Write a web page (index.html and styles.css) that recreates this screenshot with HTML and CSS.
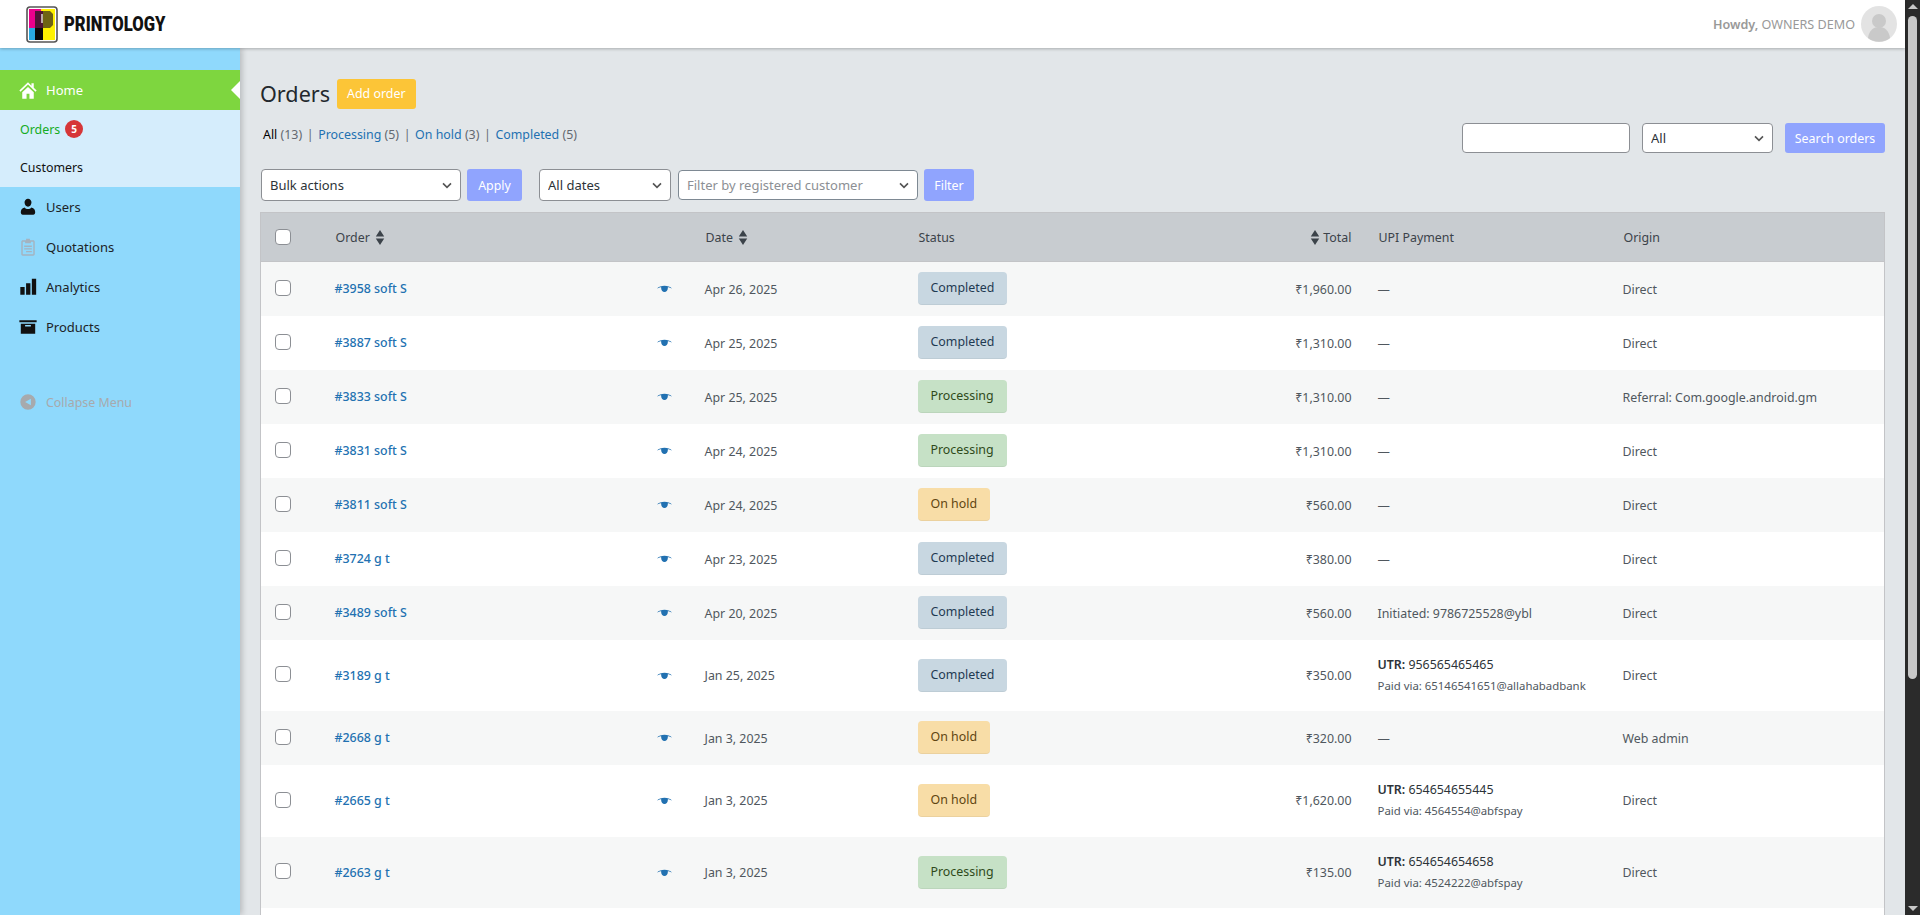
FILE: index.html
```html
<!DOCTYPE html>
<html lang="en">
<head>
    <meta charset="UTF-8">
    <meta name="viewport" content="width=device-width, initial-scale=1.0">
    <title>Orders - Printology</title>
    <link rel="stylesheet" href="styles.css">
</head>
<body>
<svg class="sprites">
    <symbol id="eye" viewBox="0 0 20 12"><path d="M0 6C4 1 16 1 20 6c-3-1.500-4.500-1.800-5.500-1.800.3 3.800-2 6.300-4.500 6.300s-4.800-2.500-4.500-6.300C4.500 4.200 3 4.500 0 6z"/></symbol>
    <symbol id="sort" viewBox="0 0 10 16"><path d="M5 0l4.500 7H.5zM5 16 .5 9h9z"/></symbol>
</svg>
<div class="app">
    <div class="page">
        <header class="topbar">
            <a class="logo" href="#">
                <svg width="32" height="37" viewBox="0 0 32 37">
                    <rect x="3" y="3" width="26" height="31" fill="#fff200"/>
                    <rect x="3" y="3" width="12" height="19" fill="#ec008c"/>
                    <rect x="3" y="22" width="6" height="12" fill="#29abe2"/>
                    <rect x="9" y="22" width="8" height="12" fill="#0a0a0a"/>
                    <rect x="9" y="5" width="8" height="17" fill="#4f1436"/>
                    <path d="M17 5h7l3 3v11l-3 3h-7z" fill="#6e6314"/>
                    <rect x="15" y="8" width="2" height="9" fill="#b9a9a9"/>
                    <rect x="1" y="1" width="30" height="35" rx="3" fill="none" stroke="#555" stroke-width="1.6"/>
                </svg>
                <span class="logo-text">PRINTOLOGY</span>
            </a>
            <div class="account">
                <span class="howdy"><b>Howdy,</b> OWNERS DEMO</span>
                <svg class="avatar" width="36" height="36" viewBox="0 0 36 36">
                    <circle cx="18" cy="18" r="18" fill="#e3e3e3"/>
                    <circle cx="18" cy="15" r="7" fill="#c9c9c9"/>
                    <path d="M7 32c1-8 6-11 11-11s10 3 11 11a18 18 0 0 1-22 0z" fill="#c9c9c9"/>
                </svg>
            </div>
        </header>

        <div class="layout">
            <nav class="sidebar">
                <ul class="menu">
                    <li class="menu-item current">
                        <svg class="menu-icon" viewBox="0 0 20 20"><path fill="#fff" d="M10 2 1 10.5l1.2 1.2L10 4.4l7.8 7.3 1.2-1.2-3-2.8V3h-2.4v2.5zM4 12.4V19h4.5v-5h3v5H16v-6.6L10 6.8z"/></svg>
                        <a href="#">Home</a>
                    </li>
                    <li class="submenu">
                        <a class="sub-link active" href="#">Orders <span class="badge">5</span></a>
                        <a class="sub-link" href="#">Customers</a>
                    </li>
                    <li class="menu-item">
                        <svg class="menu-icon" viewBox="0 0 20 20"><path fill="#111" d="M10 1.5a3.6 3.6 0 0 0-3.6 3.9c0 2.4 1.6 4.3 3.6 4.3s3.6-1.9 3.6-4.3A3.6 3.6 0 0 0 10 1.500zM6.500 10.500C3.500 11.300 2.500 13 2.500 15.500c0 1.800.8 2.500 2 2.500h11c1.200 0 2-.7 2-2.500 0-2.500-1-4.200-4-5-.8 1-2 1.700-3.500 1.700s-2.700-.7-3.500-1.700z"/></svg>
                        <a href="#">Users</a>
                    </li>
                    <li class="menu-item">
                        <svg class="menu-icon" viewBox="0 0 20 20"><path fill="#a5b3bf" fill-rule="evenodd" d="M8 1.500h4V3h3.500c.8 0 1.500.7 1.500 1.500v13c0 .8-.7 1.500-1.500 1.500h-11C3.700 19 3 18.300 3 17.500v-13C3 3.700 3.700 3 4.500 3H8zM4.500 4.500v13h11v-13H13V6H7V4.500zM6 8.500h8V10H6zm0 2.800h8v1.400H6zm2 2.800h6v1.400H8z"/></svg>
                        <a href="#">Quotations</a>
                    </li>
                    <li class="menu-item">
                        <svg class="menu-icon" viewBox="0 0 20 20"><path fill="#111" d="M2 10h4.500v8H2zm6-4h4.500v12H8zm6-4.500h4.500V18H14z"/></svg>
                        <a href="#">Analytics</a>
                    </li>
                    <li class="menu-item">
                        <svg class="menu-icon" viewBox="0 0 20 20"><path fill="#111" fill-rule="evenodd" d="M1 3h18v2H1zm1.500 3.500h15V17h-15zM7 8v1.500h6V8z"/></svg>
                        <a href="#">Products</a>
                    </li>
                </ul>
                <div class="collapse">
                    <svg class="menu-icon" viewBox="0 0 20 20"><path fill="#a7aaad" fill-rule="evenodd" d="M10 2a8 8 0 1 1 0 16 8 8 0 0 1 0-16zm3 4.500L7 10l6 3.500z"/></svg>
                    <span>Collapse Menu</span>
                </div>
            </nav>

            <main class="content">
                <div class="heading">
                    <h1>Orders</h1>
                    <a class="add-order" href="#">Add order</a>
                </div>

                <div class="toolbar-top">
                    <ul class="views">
                        <li><a class="current-view" href="#">All</a> <span class="count">(13)</span></li>
                        <li class="sep">|</li>
                        <li><a href="#">Processing</a> <span class="count">(5)</span></li>
                        <li class="sep">|</li>
                        <li><a href="#">On hold</a> <span class="count">(3)</span></li>
                        <li class="sep">|</li>
                        <li><a href="#">Completed</a> <span class="count">(5)</span></li>
                    </ul>
                    <form class="search">
                        <input class="search-input" type="text">
                        <select class="field search-type"><option>All</option></select>
                        <button class="btn btn-search" type="button">Search orders</button>
                    </form>
                </div>

                <div class="toolbar-bottom">
                    <select class="field bulk"><option>Bulk actions</option></select>
                    <button class="btn btn-apply" type="button">Apply</button>
                    <select class="field dates"><option>All dates</option></select>
                    <select class="field customer"><option>Filter by registered customer</option></select>
                    <button class="btn btn-filter" type="button">Filter</button>
                </div>

                <table class="orders">
                    <thead>
                        <tr>
                            <th class="col-check"><input class="check" type="checkbox"></th>
                            <th class="col-order">Order <svg class="sort"><use href="#sort"/></svg></th>
                            <th class="col-eye"></th>
                            <th class="col-date">Date <svg class="sort"><use href="#sort"/></svg></th>
                            <th class="col-status">Status</th>
                            <th class="col-total"><svg class="sort"><use href="#sort"/></svg> Total</th>
                            <th class="col-upi">UPI Payment</th>
                            <th class="col-origin">Origin</th>
                        </tr>
                    </thead>
                    <tbody>
                        <tr>
                            <td class="col-check"><input class="check" type="checkbox"></td>
                            <td class="col-order"><a href="#">#3958 soft S</a></td>
                            <td class="col-eye"><svg class="eye"><use href="#eye"/></svg></td>
                            <td class="col-date">Apr 26, 2025</td>
                            <td><span class="status completed">Completed</span></td>
                            <td class="col-total">₹1,960.00</td>
                            <td class="col-upi">—</td>
                            <td class="col-origin">Direct</td>
                        </tr>
                        <tr>
                            <td class="col-check"><input class="check" type="checkbox"></td>
                            <td class="col-order"><a href="#">#3887 soft S</a></td>
                            <td class="col-eye"><svg class="eye"><use href="#eye"/></svg></td>
                            <td class="col-date">Apr 25, 2025</td>
                            <td><span class="status completed">Completed</span></td>
                            <td class="col-total">₹1,310.00</td>
                            <td class="col-upi">—</td>
                            <td class="col-origin">Direct</td>
                        </tr>
                        <tr>
                            <td class="col-check"><input class="check" type="checkbox"></td>
                            <td class="col-order"><a href="#">#3833 soft S</a></td>
                            <td class="col-eye"><svg class="eye"><use href="#eye"/></svg></td>
                            <td class="col-date">Apr 25, 2025</td>
                            <td><span class="status processing">Processing</span></td>
                            <td class="col-total">₹1,310.00</td>
                            <td class="col-upi">—</td>
                            <td class="col-origin">Referral: Com.google.android.gm</td>
                        </tr>
                        <tr>
                            <td class="col-check"><input class="check" type="checkbox"></td>
                            <td class="col-order"><a href="#">#3831 soft S</a></td>
                            <td class="col-eye"><svg class="eye"><use href="#eye"/></svg></td>
                            <td class="col-date">Apr 24, 2025</td>
                            <td><span class="status processing">Processing</span></td>
                            <td class="col-total">₹1,310.00</td>
                            <td class="col-upi">—</td>
                            <td class="col-origin">Direct</td>
                        </tr>
                        <tr>
                            <td class="col-check"><input class="check" type="checkbox"></td>
                            <td class="col-order"><a href="#">#3811 soft S</a></td>
                            <td class="col-eye"><svg class="eye"><use href="#eye"/></svg></td>
                            <td class="col-date">Apr 24, 2025</td>
                            <td><span class="status on-hold">On hold</span></td>
                            <td class="col-total">₹560.00</td>
                            <td class="col-upi">—</td>
                            <td class="col-origin">Direct</td>
                        </tr>
                        <tr>
                            <td class="col-check"><input class="check" type="checkbox"></td>
                            <td class="col-order"><a href="#">#3724 g t</a></td>
                            <td class="col-eye"><svg class="eye"><use href="#eye"/></svg></td>
                            <td class="col-date">Apr 23, 2025</td>
                            <td><span class="status completed">Completed</span></td>
                            <td class="col-total">₹380.00</td>
                            <td class="col-upi">—</td>
                            <td class="col-origin">Direct</td>
                        </tr>
                        <tr>
                            <td class="col-check"><input class="check" type="checkbox"></td>
                            <td class="col-order"><a href="#">#3489 soft S</a></td>
                            <td class="col-eye"><svg class="eye"><use href="#eye"/></svg></td>
                            <td class="col-date">Apr 20, 2025</td>
                            <td><span class="status completed">Completed</span></td>
                            <td class="col-total">₹560.00</td>
                            <td class="col-upi dark">Initiated: 9786725528@ybl</td>
                            <td class="col-origin">Direct</td>
                        </tr>
                        <tr class="tall">
                            <td class="col-check"><input class="check" type="checkbox"></td>
                            <td class="col-order"><a href="#">#3189 g t</a></td>
                            <td class="col-eye"><svg class="eye"><use href="#eye"/></svg></td>
                            <td class="col-date">Jan 25, 2025</td>
                            <td><span class="status completed">Completed</span></td>
                            <td class="col-total">₹350.00</td>
                            <td class="col-upi"><div class="utr"><b>UTR:</b> 956565465465</div><small class="via">Paid via: 65146541651@allahabadbank</small></td>
                            <td class="col-origin">Direct</td>
                        </tr>
                        <tr>
                            <td class="col-check"><input class="check" type="checkbox"></td>
                            <td class="col-order"><a href="#">#2668 g t</a></td>
                            <td class="col-eye"><svg class="eye"><use href="#eye"/></svg></td>
                            <td class="col-date">Jan 3, 2025</td>
                            <td><span class="status on-hold">On hold</span></td>
                            <td class="col-total">₹320.00</td>
                            <td class="col-upi">—</td>
                            <td class="col-origin">Web admin</td>
                        </tr>
                        <tr class="tall taller">
                            <td class="col-check"><input class="check" type="checkbox"></td>
                            <td class="col-order"><a href="#">#2665 g t</a></td>
                            <td class="col-eye"><svg class="eye"><use href="#eye"/></svg></td>
                            <td class="col-date">Jan 3, 2025</td>
                            <td><span class="status on-hold">On hold</span></td>
                            <td class="col-total">₹1,620.00</td>
                            <td class="col-upi"><div class="utr"><b>UTR:</b> 654654655445</div><small class="via">Paid via: 4564554@abfspay</small></td>
                            <td class="col-origin">Direct</td>
                        </tr>
                        <tr class="tall">
                            <td class="col-check"><input class="check" type="checkbox"></td>
                            <td class="col-order"><a href="#">#2663 g t</a></td>
                            <td class="col-eye"><svg class="eye"><use href="#eye"/></svg></td>
                            <td class="col-date">Jan 3, 2025</td>
                            <td><span class="status processing">Processing</span></td>
                            <td class="col-total">₹135.00</td>
                            <td class="col-upi"><div class="utr"><b>UTR:</b> 654654654658</div><small class="via">Paid via: 4524222@abfspay</small></td>
                            <td class="col-origin">Direct</td>
                        </tr>
                        <tr>
                            <td colspan="8"></td>
                        </tr>
                    </tbody>
                </table>
            </main>
        </div>
    </div>

    <div class="scrollbar">
        <span class="arrow-up"></span>
        <span class="thumb"></span>
        <span class="arrow-down"></span>
    </div>
</div>
</body>
</html>
```

FILE: styles.css
```css
* {
    box-sizing: border-box;
}

html, body {
    height: 100%;
}

body {
    margin: 0;
    overflow: hidden;
    font-family: "Noto Sans", "Open Sans", Arial, sans-serif;
    font-size: 12.4px;
    color: #3c434a;
    background: #e2e6e9;
}

a {
    text-decoration: none;
}

.sprites {
    display: none;
}

.app {
    display: flex;
    height: 100vh;
}

.page {
    flex: 1;
    min-width: 0;
    display: flex;
    flex-direction: column;
}

/* top bar */
.topbar {
    flex: none;
    height: 48px;
    display: flex;
    justify-content: space-between;
    align-items: center;
    padding: 0 8px 0 26px;
    background: #fff;
    box-shadow: 0 1px 3px rgba(0, 0, 0, 0.25);
    position: relative;
    z-index: 2;
}

.logo {
    display: flex;
    align-items: center;
    gap: 6px;
}

.logo-text {
    font-family: "Roboto", "Liberation Sans", sans-serif;
    font-size: 20px;
    font-weight: 900;
    color: #111;
    transform: scaleX(0.83);
    transform-origin: left center;
}

.account {
    display: flex;
    align-items: center;
    gap: 6px;
}

.howdy {
    font-size: 12.6px;
    color: #999;
}

.howdy b {
    font-weight: 600;
}

/* side menu */
.layout {
    flex: 1;
    min-height: 0;
    display: flex;
}

.sidebar {
    flex: none;
    width: 240px;
    padding-top: 22px;
    background: #8fd9fc;
    box-shadow: 2px 0 6px rgba(0, 0, 0, 0.2);
    position: relative;
    z-index: 1;
}

.menu {
    list-style: none;
    margin: 0;
    padding: 0;
}

.menu-item {
    height: 40px;
    display: flex;
    align-items: center;
    gap: 10px;
    padding-left: 20px;
    padding-bottom: 1px;
    font-size: 13px;
}

.menu-item a {
    color: #1d2327;
}

.menu-icon {
    width: 16px;
    height: 16px;
    flex: none;
    transform: scale(1.2);
}

.menu-item.current {
    background: #7ed63f;
    position: relative;
}

.menu-item.current a {
    color: #fff;
}

.menu-item.current::after {
    content: "";
    position: absolute;
    right: 0;
    top: 11px;
    border: 9px solid transparent;
    border-right-color: #fff;
    border-left-width: 0;
}

.submenu {
    display: flex;
    flex-direction: column;
    height: 77px;
    background: #d5edfc;
}

.sub-link {
    height: 38px;
    display: flex;
    align-items: center;
    gap: 5px;
    padding-left: 20px;
    color: #111;
}

.sub-link.active {
    color: #14ac24;
}

.badge {
    width: 18px;
    height: 18px;
    border-radius: 50%;
    background: #d63638;
    color: #fff;
    font-size: 10px;
    font-weight: 700;
    text-align: center;
    line-height: 18px;
}

.collapse {
    display: flex;
    align-items: center;
    gap: 10px;
    height: 20px;
    margin-top: 45px;
    padding-left: 20px;
    color: #a7aaad;
}

/* main area */
.content {
    flex: 1;
    min-width: 0;
    padding: 31px 20px 0 20px;
    overflow: hidden;
}

.heading {
    display: flex;
    align-items: center;
    gap: 7px;
}

.heading h1 {
    margin: 0;
    font-size: 21.6px;
    font-weight: 400;
    line-height: 28px;
    color: #23282d;
}

.add-order {
    height: 30px;
    padding: 0 10px;
    line-height: 29px;
    background: #fcc537;
    color: #fff;
    border-radius: 3px;
}

.toolbar-top {
    display: flex;
    justify-content: space-between;
    margin-top: 14px;
    height: 30px;
}

.views {
    list-style: none;
    display: flex;
    gap: 4.6px;
    margin: 0;
    padding: 3px 0 0 3px;
    line-height: 18px;
    color: #646970;
}

.views a {
    color: #2271b1;
}

.views a.current-view {
    color: #000;
}

.views .sep {
    color: #646970;
}

.search {
    display: flex;
    gap: 12px;
}

.search-input {
    width: 168px;
    height: 30px;
    border: 1px solid #8c8f94;
    border-radius: 4px;
    background: #fff;
}

.field {
    appearance: none;
    height: 30px;
    padding: 0 24px 0 8px;
    border: 1px solid #8c8f94;
    border-radius: 4px;
    font: inherit;
    font-size: 13px;
    color: #2c3338;
    background: #fff url("data:image/svg+xml;utf8,<svg xmlns='http://www.w3.org/2000/svg' width='20' height='20' viewBox='0 0 20 20'><path d='M5 8l5 5 5-5' fill='none' stroke='%23555' stroke-width='2'/></svg>") no-repeat right 5px center / 16px 16px;
}

.search-type {
    width: 131px;
}

.btn {
    height: 30px;
    padding: 0 10px;
    border: 0;
    border-radius: 3px;
    background: #90a4fe;
    color: #fff;
    font: inherit;
}

.btn-search {
    width: 100px;
    padding: 0;
}

.toolbar-bottom {
    display: flex;
    align-items: center;
    margin-top: 16px;
    height: 32px;
}

.bulk {
    width: 200px;
    height: 32px;
    margin-left: 1px;
}

.btn-apply {
    width: 55px;
    height: 32px;
    margin-left: 6px;
}

.dates {
    width: 132px;
    height: 32px;
    margin-left: 17px;
}

.customer {
    width: 240px;
    margin-left: 7px;
    color: #8c8f94;
    border-color: #7e8993;
}

.btn-filter {
    width: 50px;
    height: 32px;
    margin-left: 6px;
}

/* orders table */
.orders {
    width: 100%;
    margin-top: 11px;
    table-layout: fixed;
    border-collapse: collapse;
    border: 1px solid #c3c4c7;
    background: #fff;
}

.orders th {
    height: 49px;
    padding: 0 15px 0 16px;
    text-align: left;
    font-weight: 400;
    color: #3c434a;
    background: #c8ccd0;
    border-bottom: 1px solid #c3c4c7;
}

.orders td {
    height: 54px;
    padding: 0 15px;
    vertical-align: middle;
    color: #50575e;
}

.orders tbody tr:nth-child(odd) td {
    background: #f6f7f7;
}

.orders tr.tall td {
    height: 71px;
}

.orders tr.taller td {
    height: 72px;
}

.orders .col-check {
    width: 59px;
    padding-left: 14px;
    padding-right: 0;
}

.orders td.col-check {
    padding-bottom: 2px;
}

.orders .col-order {
    width: 320px;
}

.orders .col-eye {
    width: 50px;
    padding: 0;
}

.orders .col-date {
    width: 213px;
}

.orders .col-status {
    width: 235px;
}

.orders .col-total {
    width: 225px;
    padding-right: 11px;
    text-align: right;
}

.orders .col-upi {
    width: 245px;
    white-space: nowrap;
}

/* single line rows sit a touch below the middle */
.orders tr:not(.tall) td.col-date,
.orders tr:not(.tall) td.col-total,
.orders tr:not(.tall) td.col-upi,
.orders tr:not(.tall) td.col-origin {
    padding-top: 2px;
}

.orders tr.tall td.col-upi {
    padding-bottom: 2px;
}

.check {
    appearance: none;
    display: block;
    width: 16px;
    height: 16px;
    margin: 0;
    background: #fff;
    border: 1px solid #8c8f94;
    border-radius: 4px;
}

.col-order a {
    color: #2271b1;
    font-weight: 500;
}

.sort {
    width: 10px;
    height: 15px;
    margin-left: 2px;
    vertical-align: -3px;
    fill: #3c434a;
}

.eye {
    display: block;
    width: 15px;
    height: 9px;
    margin-left: 17px;
    fill: #2271b1;
}

.status {
    display: inline-block;
    height: 33px;
    padding: 0 13px;
    line-height: 32px;
    border-radius: 4px;
    border-bottom: 1px solid rgba(0, 0, 0, 0.05);
    white-space: nowrap;
}

.status.completed {
    background: #c8d7e1;
    color: #1f3a52;
}

.status.processing {
    background: #c6e1c6;
    color: #2f4a1a;
}

.status.on-hold {
    background: #f8dda7;
    color: #5f4510;
}

.dark,
.utr {
    color: #2c3338;
}

.utr b {
    font-weight: 600;
}

.via {
    display: block;
    margin-top: 5px;
    font-size: 11.4px;
    color: #50575e;
}

/* page scrollbar, the window's own one does not show in the shot */
.scrollbar {
    flex: none;
    width: 15px;
    display: flex;
    flex-direction: column;
    align-items: center;
    padding: 4px 0;
    background: #2b2b2b;
}

.arrow-up,
.arrow-down {
    flex: none;
    border: 5px solid transparent;
}

.arrow-up {
    border-top-width: 0;
    border-bottom-color: #c8c8c8;
}

.arrow-down {
    border-bottom-width: 0;
    border-top-color: #c8c8c8;
    margin-top: auto;
}

.thumb {
    width: 9px;
    height: 663px;
    margin-top: 7px;
    border-radius: 5px;
    background: #c8c8c8;
}
```
